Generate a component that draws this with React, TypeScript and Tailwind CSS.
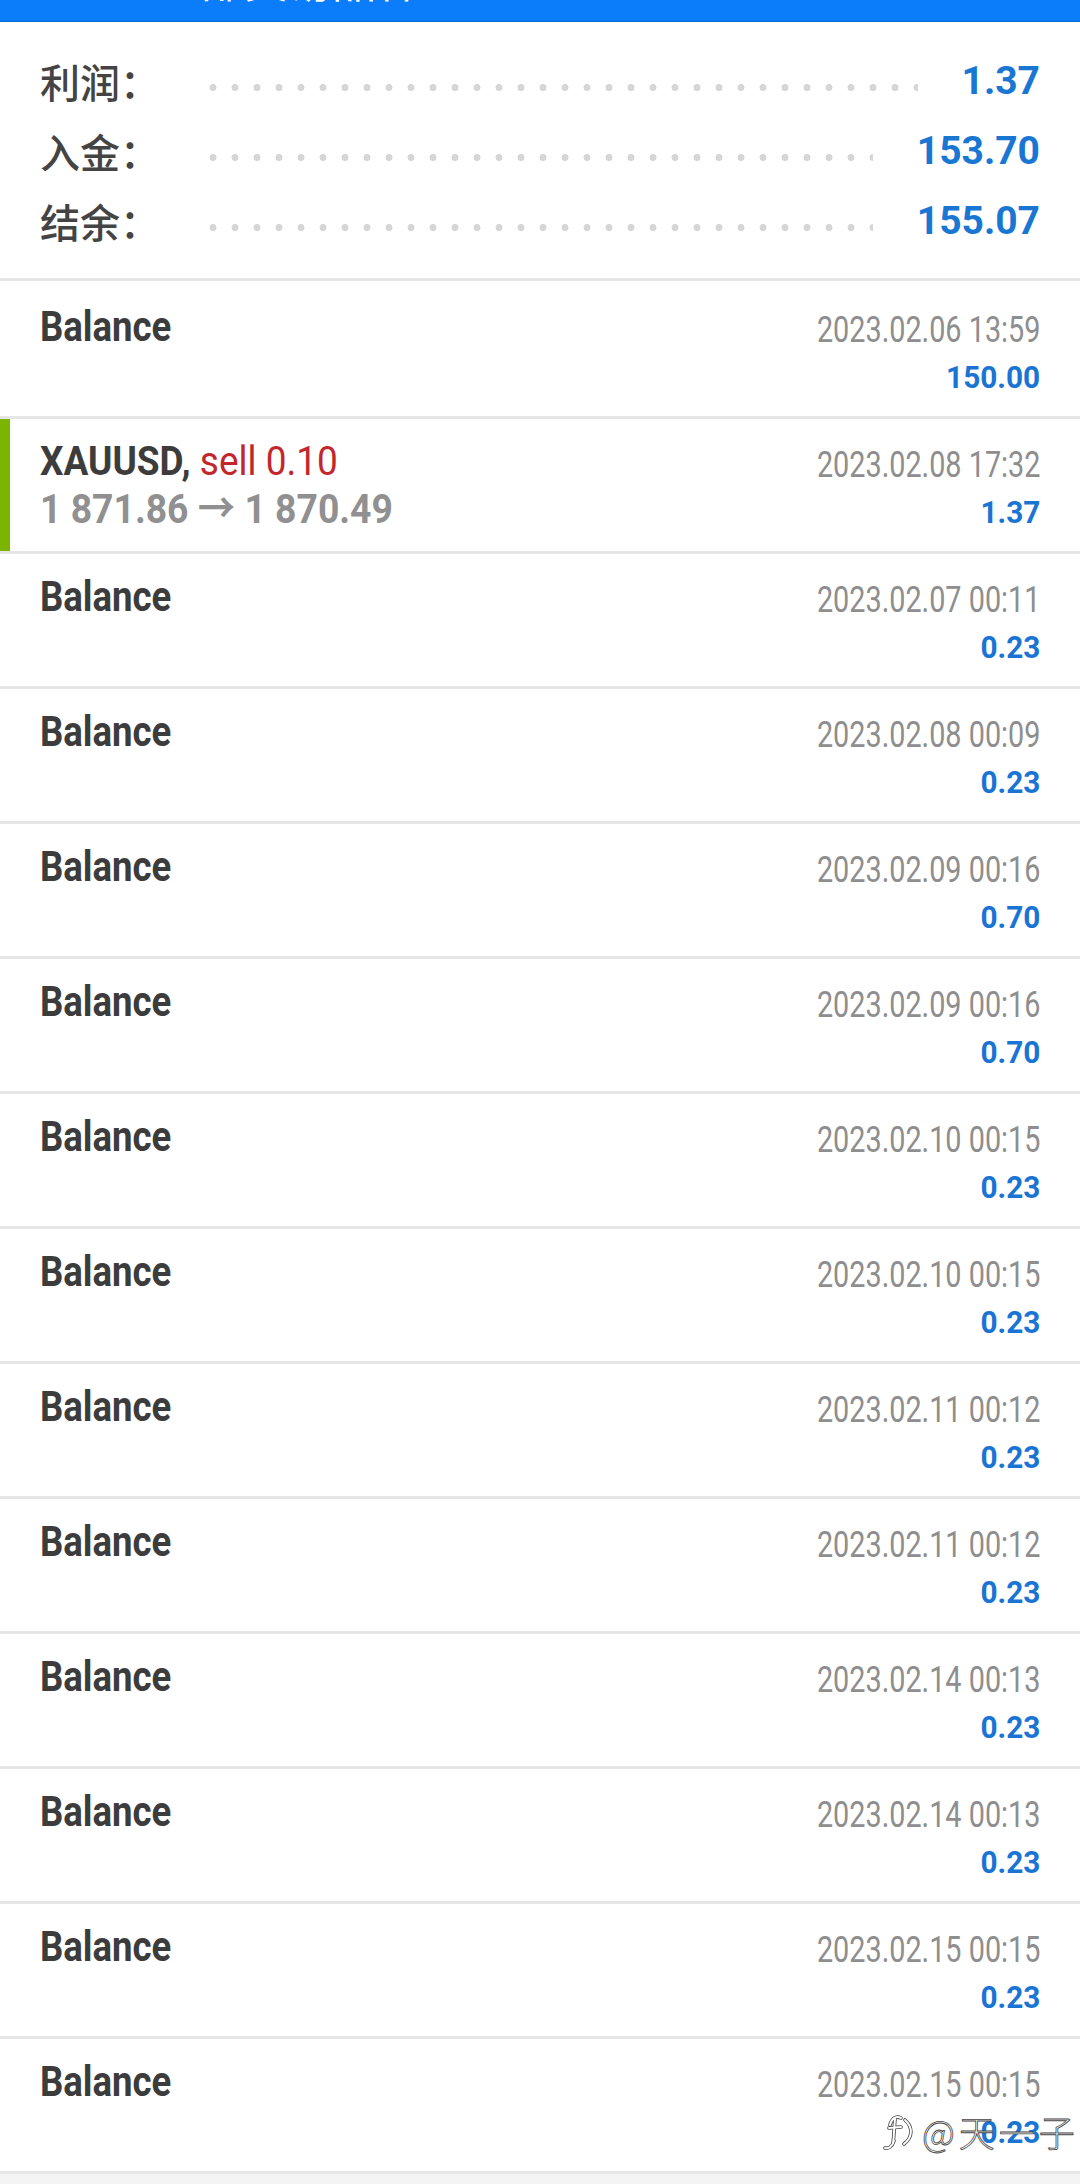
import React from "react";

type Row =
  | { kind: "balance"; date: string; amount: string }
  | { kind: "trade"; date: string; amount: string };

const rows: Row[] = [
  { kind: "balance", date: "2023.02.06 13:59", amount: "150.00" },
  { kind: "trade", date: "2023.02.08 17:32", amount: "1.37" },
  { kind: "balance", date: "2023.02.07 00:11", amount: "0.23" },
  { kind: "balance", date: "2023.02.08 00:09", amount: "0.23" },
  { kind: "balance", date: "2023.02.09 00:16", amount: "0.70" },
  { kind: "balance", date: "2023.02.09 00:16", amount: "0.70" },
  { kind: "balance", date: "2023.02.10 00:15", amount: "0.23" },
  { kind: "balance", date: "2023.02.10 00:15", amount: "0.23" },
  { kind: "balance", date: "2023.02.11 00:12", amount: "0.23" },
  { kind: "balance", date: "2023.02.11 00:12", amount: "0.23" },
  { kind: "balance", date: "2023.02.14 00:13", amount: "0.23" },
  { kind: "balance", date: "2023.02.14 00:13", amount: "0.23" },
  { kind: "balance", date: "2023.02.15 00:15", amount: "0.23" },
  { kind: "balance", date: "2023.02.15 00:15", amount: "0.23" },
];

const summary = [
  { label: "利润：", value: "1.37" },
  { label: "入金：", value: "153.70" },
  { label: "结余：", value: "155.07" },
];

function RightCol({ date, amount }: { date: string; amount: string }) {
  return (
    <div className="flex flex-col items-end text-right">
      <div className="h-[48px] text-[36px] leading-[48px] text-[#8e8e8e]">
        <span className="inline-block origin-right scale-x-[0.8] whitespace-nowrap">
          {date}
        </span>
      </div>
      <div className="h-[46px] text-[32px] font-bold leading-[46px] text-[#1a74d4]">
        <span className="inline-block origin-right scale-x-[0.93] whitespace-nowrap">
          {amount}
        </span>
      </div>
    </div>
  );
}

function HistoryRow({ row, first }: { row: Row; first: boolean }) {
  const height = first ? "h-[138px] pt-[25px]" : "h-[135px] pt-[22px]";
  if (row.kind === "trade") {
    return (
      <div className="flex h-[135px] border-b-[3px] border-[#e6e6e6] bg-white">
        <div className="w-[10px] shrink-0 bg-[#7cb500]" />
        <div className="flex flex-1 justify-between pt-[22px] pr-[40px] pl-[30px]">
          <div>
            <div className="h-[42px] text-[40px] leading-[42px]">
              <span className="inline-block origin-left scale-x-[0.925] whitespace-nowrap">
                <span className="font-bold text-[#3c3c3c]">XAUUSD,</span>{" "}
                <span className="text-[#c3262b]">sell 0.10</span>
              </span>
            </div>
            <div className="h-[53px] text-[41px] font-bold leading-[53px] text-[#909090]">
              <span className="inline-block origin-left scale-x-[0.91] whitespace-nowrap">
                1 871.86 → 1 870.49
              </span>
            </div>
          </div>
          <RightCol date={row.date} amount={row.amount} />
        </div>
      </div>
    );
  }
  return (
    <div
      className={`flex justify-between border-b-[3px] border-[#e6e6e6] bg-white px-[40px] ${height}`}
    >
      <div className="h-[42px] text-[42px] font-bold leading-[42px] text-[#3c3c3c]">
        <span className="inline-block origin-left scale-x-[0.87]">Balance</span>
      </div>
      <RightCol date={row.date} amount={row.amount} />
    </div>
  );
}

function ZhihuMark() {
  const f =
    "M14 30 C 12 36, 8 38, 5 37 M 10 14 C 12 6, 17 5, 21 7 M 9 17 L 21 16 M 15 8 C 14 18, 14 26, 13 32";
  const bracket = "M25 9 C 33 16, 33 26, 24 33";
  return (
    <svg width="38" height="40" viewBox="0 0 38 40" fill="none">
      <path d={f} stroke="#444" strokeWidth="3.6" strokeLinecap="round" />
      <path d={f} stroke="#fff" strokeWidth="2" strokeLinecap="round" />
      <path d={bracket} stroke="#444" strokeWidth="3.6" strokeLinecap="round" />
      <path d={bracket} stroke="#fff" strokeWidth="2" strokeLinecap="round" />
    </svg>
  );
}

export default function App() {
  return (
    <div className="relative min-h-[2184px] w-[1080px] bg-[#f4f4f4] font-[Roboto,'Noto_Sans_CJK_SC',sans-serif]">
      {/* app bar, scrolled almost out of view */}
      <div className="h-[22px] overflow-hidden border-b border-[#0a66cc] bg-[#0b7cfa]">
        <div className="-mt-[43px] pl-[156px] font-['Noto_Sans_CJK_SC',sans-serif] text-[44px] leading-[44px] text-white">
          全部交易品种
        </div>
      </div>

      <div className="border-b-[3px] border-[#e6e6e6] bg-white px-[40px] pt-[24px] pb-[22px]">
        {summary.map((s) => (
          <div key={s.label} className="flex h-[70px] items-center">
            <div className="w-[162px] shrink-0 font-['Noto_Sans_CJK_SC',sans-serif] text-[40px] font-medium text-[#444]">
              {s.label}
            </div>
            <div className="mt-[12px] mr-[44px] h-[7px] flex-1 bg-[radial-gradient(circle,#d6d6d6_3.2px,transparent_3.8px)] bg-size-[22px_7px] bg-repeat-x" />
            <div className="text-[39px] font-bold text-[#1976d2]">{s.value}</div>
          </div>
        ))}
      </div>

      {rows.map((r, i) => (
        <HistoryRow key={i} row={r} first={i === 0} />
      ))}

      {/* watermark */}
      <div className="absolute top-[2104px] left-[880px] flex items-center gap-[4px]">
        <ZhihuMark />
        <span className="font-['Noto_Sans_CJK_SC',sans-serif] text-[36px] font-light tracking-[4px] text-white [-webkit-text-stroke:0.8px_#444]">
          @天一子
        </span>
      </div>
    </div>
  );
}
